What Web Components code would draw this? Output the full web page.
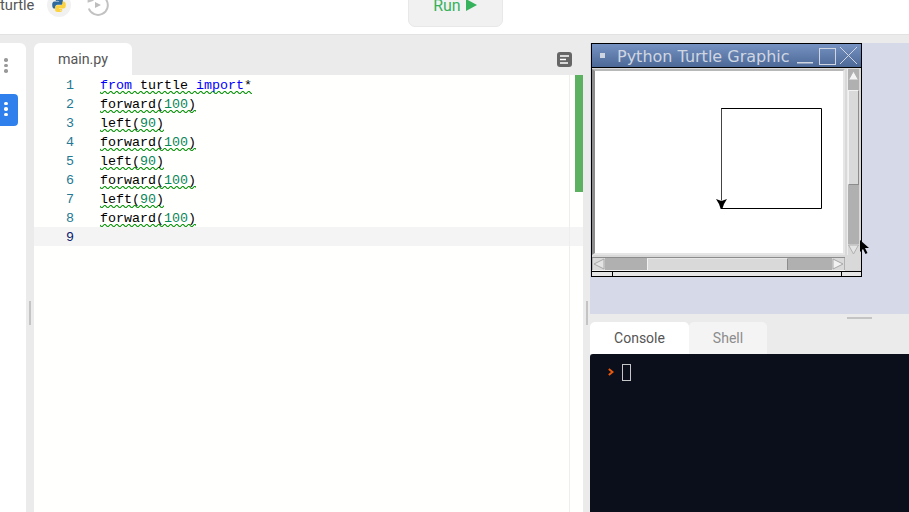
<!DOCTYPE html>
<html>
<head>
<meta charset="utf-8">
<title>turtle</title>
<style>
  html, body { margin: 0; height: 512px; overflow: hidden; background: #ebebeb; }
  body { font-family: Roboto, "Liberation Sans", sans-serif; color: #444; }
  .main { display: flex; padding-top: 8px; height: 469px; }
  .right { width: 319px; display: flex; flex-direction: column; }
</style>
</head>
<body>
<top-bar>turtle</top-bar>
<div class="main">
  <side-rail></side-rail>
  <split-handle style="width:8px" pad="3"></split-handle>
  <code-editor file="main.py"></code-editor>
  <split-handle style="width:7px" pad="3"></split-handle>
  <div class="right">
    <turtle-stage><turtle-window>Python Turtle Graphic</turtle-window></turtle-stage>
    <console-panel></console-panel>
  </div>
</div>

<script>
class TopBar extends HTMLElement {
  constructor() {
    super();
    this.attachShadow({ mode: "open" });
    this.shadowRoot.innerHTML = `
      <style>
        :host { display: block; height: 34px; background: #fff; border-bottom: 1px solid #e2e2e2; overflow: hidden; }
        .row { display: flex; align-items: center; height: 44px; margin-top: -17px; font-size: 14.7px; color: #555; }
        .lang { width: 24px; height: 24px; border-radius: 50%; background: #f1f1f1; margin-left: 13px; display: flex; align-items: center; justify-content: center; }
        .hist { margin-left: 15px; width: 24px; height: 24px; }
        .run { margin-left: 298px; width: 95px; height: 44px; box-sizing: border-box; padding-right: 2px; background: #f1f1f1; border: 1px solid #e8e8e8; border-radius: 7px; color: #37b25c; font-size: 16px; display: flex; align-items: center; justify-content: center; gap: 5px; }
      </style>
      <div class="row">
        <slot></slot>
        <span class="lang">
          <svg width="16" height="16" viewBox="0 0 24 24">
            <path fill="#2f6a9e" d="M11.9 1.5C6.9 1.5 7.2 3.7 7.2 3.7v2.4h4.9v.8H5.3S1.8 6.5 1.8 12s3.1 5.4 3.1 5.4h1.9v-2.600s-.1-3.100 3-3.100h5.100s2.900 0 2.900-2.800V4.300S18.300 1.500 11.900 1.500zM9.200 3.100a.9.9 0 1 1 0 1.800.9.9 0 0 1 0-1.800z"/>
            <path fill="#fcd23f" transform="rotate(180 12 12)" d="M11.9 1.500C6.900 1.500 7.200 3.700 7.200 3.700v2.400h4.900v.8H5.300S1.800 6.500 1.800 12s3.100 5.400 3.100 5.400h1.900v-2.600s-.1-3.100 3-3.100h5.100s2.900 0 2.900-2.800V4.300S18.300 1.500 11.900 1.500zM9.200 3.100a.9.9 0 1 1 0 1.800.9.9 0 0 1 0-1.800z"/>
          </svg>
        </span>
        <svg class="hist" viewBox="0 0 24 24" fill="none">
          <path d="M6.200 4.200A9.800 9.800 0 1 1 2.800 15.500" stroke="#c2c2c2" stroke-width="2"/>
          <path d="M2.500 2.500l3.500 2.500M2.500 2.500v6l5-1.500" stroke="#c2c2c2" stroke-width="1.800"/>
          <path d="M9 9l6 3-6 3z" fill="#bdbdbd"/>
        </svg>
        <span class="run">Run
          <svg width="11" height="12" viewBox="0 0 11 12"><path d="M0 0l11 6-11 6z" fill="#37b25c"/></svg>
        </span>
      </div>`;
  }
}

class SideRail extends HTMLElement {
  constructor() {
    super();
    this.attachShadow({ mode: "open" });
    this.shadowRoot.innerHTML = `
      <style>
        :host { display: block; width: 26px; background: #fff; border-top-right-radius: 6px; padding-top: 15px; box-sizing: border-box; }
        .dots { display: flex; flex-direction: column; align-items: center; gap: 2px; width: 12px; }
        .dots i { width: 3.5px; height: 3.5px; border-radius: 50%; background: #999; }
        .btn { margin-top: 21px; width: 18px; height: 32px; background: #2f80ed; border-radius: 0 4px 4px 0; padding-top: 8px; box-sizing: border-box; }
        .btn i { background: #fff; }
      </style>
      <div class="dots"><i></i><i></i><i></i></div>
      <div class="btn"><div class="dots"><i></i><i></i><i></i></div></div>`;
  }
}

class SplitHandle extends HTMLElement {
  constructor() {
    super();
    this.attachShadow({ mode: "open" });
    this.shadowRoot.innerHTML = `
      <style>
        :host { display: block; flex: none; box-sizing: border-box; padding-top: 258px; }
        div { width: 2px; height: 24px; background: #c4c4c4; }
      </style>
      <div></div>`;
  }
  connectedCallback() {
    this.style.paddingLeft = this.getAttribute("pad") + "px";
  }
}

class CodeEditor extends HTMLElement {
  constructor() {
    super();
    this.attachShadow({ mode: "open" });
    const kw = (s) => `<b>${s}</b>`;
    const num = (s) => `<u>${s}</u>`;
    const lines = [
      `${kw("from")} turtle ${kw("import")}*`,
      `forward(${num(100)})`,
      `left(${num(90)})`,
      `forward(${num(100)})`,
      `left(${num(90)})`,
      `forward(${num(100)})`,
      `left(${num(90)})`,
      `forward(${num(100)})`,
      ``,
    ];
    const rows = lines.map((code, i) => `
      <div class="line ${code ? "" : "active"}">
        <span class="no">${i + 1}</span><span class="code">${code}</span>
      </div>`).join("");
    // same zigzag an editor squiggle uses, 6x3 tile along the bottom of the line
    const squiggle = `url("data:image/svg+xml,%3Csvg xmlns='http://www.w3.org/2000/svg' viewBox='0 0 6 3' height='3' width='6'%3E%3Cg fill='%23009000'%3E%3Cpolygon points='5.5,0 2.5,3 1.1,3 4.1,0'/%3E%3Cpolygon points='4,0 6,2 6,0.6 5.4,0'/%3E%3Cpolygon points='0,2 1,3 2.4,3 0,0.6'/%3E%3C/g%3E%3C/svg%3E")`;
    this.shadowRoot.innerHTML = `
      <style>
        :host { display: flex; flex-direction: column; width: 549px; flex: none; }
        .tabs { display: flex; height: 32px; align-items: stretch; justify-content: space-between; }
        .tab { width: 98px; background: #fff; border-radius: 6px 6px 0 0; font-size: 14.3px; color: #555; display: flex; align-items: center; justify-content: center; }
        .outline { margin: 9px 11px 0 0; width: 15px; height: 15px; }
        .body { flex: 1; position: relative; background: #fffffd; font: 13.333px/19px "Liberation Mono", monospace; color: #000; }
        .line { display: flex; height: 19px; box-sizing: border-box; padding-top: 1px; white-space: pre; }
        .line.active { background: #f4f4f4; }
        .no { width: 40px; text-align: right; color: #237893; margin-right: 26px; flex: none; }
        .active .no { color: #0b216f; }
        .code { background: ${squiggle} repeat-x left bottom; height: 18px; }
        .active .code { background: none; }
        b { font-weight: normal; color: #0000ff; }
        u { text-decoration: none; color: #098658; }
        .scroll { position: absolute; top: 0; bottom: 0; right: 0; width: 13px; border-left: 1px solid #eeeeee; }
        .scroll i { position: absolute; right: 0; top: 0; width: 8px; height: 117px; background: #5cb161; }
      </style>
      <div class="tabs">
        <div class="tab">${this.getAttribute("file")}</div>
        <svg class="outline" viewBox="0 0 15 15">
          <rect width="15" height="15" rx="3" fill="#666"/>
          <path d="M3 4h9M3 7.5h6M3 11h8" stroke="#fff" stroke-width="1.5"/>
        </svg>
      </div>
      <div class="body">${rows}<div class="scroll"><i></i></div></div>`;
  }
}

class TurtleStage extends HTMLElement {
  constructor() {
    super();
    this.attachShadow({ mode: "open" });
    this.shadowRoot.innerHTML = `
      <style>
        :host { display: block; position: relative; height: 271px; background: #d6d9e8; flex: none; }
        ::slotted(turtle-window) { position: absolute; left: 1px; top: 0; }
        svg { position: absolute; left: 270px; top: 197px; }
      </style>
      <slot></slot>
      <svg width="10" height="16" viewBox="0 0 10 16"><path d="M0 0v12l3-3 2.5 5 2-1L5 8h4z" fill="#000"/></svg>`;
  }
}

class TurtleWindow extends HTMLElement {
  constructor() {
    super();
    this.attachShadow({ mode: "open" });
    this.shadowRoot.innerHTML = `
      <style>
        :host { width: 271px; height: 234px; box-sizing: border-box; border: 1px solid #000; background: #d9d9d9; display: flex; flex-direction: column; }
        .title { height: 23px; flex: none; background: linear-gradient(#7592c2, #4c6896); border-bottom: 1px solid #000; display: flex; align-items: center; color: #cfd6e2; font: 16px "DejaVu Sans", sans-serif; white-space: nowrap; overflow: hidden; }
        .pin { width: 5px; height: 5px; background: #cfd6e2; margin: 0 12px 0 8px; flex: none; }
        .label { margin-top: 2px; }
        .btns { margin-left: 7px; flex: none; display: block; }
        .grid { flex: 1; display: grid; grid-template-columns: 253px 13px; grid-template-rows: 186px 14px; column-gap: 2px; row-gap: 2px; padding-top: 1px; min-height: 0; }
        .frame { box-sizing: border-box; background: #fff; border-style: solid; border-width: 2px 2px 2px 3px; border-color: #b8b8b8 #e6e6e6 #e6e6e6 #8c8c8c; }
        .frame svg { display: block; }
        .v { background: #b0b0b0; position: relative; border-left: 1px solid #ececec; border-right: 1px solid #d9d9d9; box-sizing: border-box; }
        .v i { position: absolute; left: 0; right: 0; top: 21px; height: 95px; background: #d9d9d9; border-top: 1px solid #f2f2f2; border-left: 1px solid #f2f2f2; border-bottom: 1px solid #8c8c8c; border-right: 1px solid #8c8c8c; box-sizing: border-box; }
        .h { background: #b0b0b0; position: relative; border-bottom: 1px solid #f2f2f2; border-top: 1px solid #8c8c8c; box-sizing: border-box; }
        .h i { position: absolute; left: 55px; width: 141px; top: 0; bottom: 0; background: #d9d9d9; border-top: 1px solid #e6e6e6; border-left: 1px solid #f2f2f2; border-right: 1px solid #8c8c8c; box-sizing: border-box; }
        .arrow { position: absolute; display: block; }
        .lit { background: #d9d9d9; }
        .status { flex: none; height: 4px; border-top: 1px solid #000; display: grid; grid-template-columns: 20px 1fr 20px; background: #e6e6e6; }
        .status span + span { border-left: 1px solid #000; }
      </style>
      <div class="title">
        <span class="pin"></span><span class="label"><slot></slot></span>
        <svg class="btns" width="62" height="23" viewBox="0 0 62 23" fill="none" stroke="#cfd6e2">
          <path d="M0 18h16v1.5H0z" fill="#cfd6e2" stroke="none"/>
          <rect x="22.5" y="4.5" width="16" height="16"/>
          <path d="M43 3l17 17M60 3L43 20"/>
        </svg>
      </div>
      <div class="grid">
        <div class="frame">
          <svg width="248" height="182" viewBox="0 0 248 182" fill="none">
            <path d="M126 37.5h100.5v100h-100" stroke="#000"/>
            <path d="M126.5 37.5v92" stroke="#444"/>
            <path d="M121 128l5.5 2 5.5-2-3 5-1.700 5h-1.600l-1.700-5z" fill="#000"/>
          </svg>
        </div>
        <div class="v">
          <svg class="arrow" style="top:1px;left:0" width="11" height="11"><path d="M5.500 1l5 9H.5z" fill="#f4f4f4" stroke="#b0b0b0"/></svg>
          <i></i>
          <svg class="arrow lit" style="bottom:0;left:0" width="11" height="11"><path d="M5.500 10l5-9H.5z" fill="#e4e4e4" stroke="#b0b0b0"/></svg>
        </div>
        <div class="h">
          <svg class="arrow lit" style="left:1px;top:0" width="12" height="12"><path d="M1 6l10-5v10z" fill="#e4e4e4" stroke="#a8a8a8"/></svg>
          <i></i>
          <svg class="arrow lit" style="right:1px;top:0" width="12" height="12"><path d="M11 6L1 1v10z" fill="#f2f2f2" stroke="#a8a8a8"/></svg>
        </div>
      </div>
      <div class="status"><span></span><span></span><span></span></div>`;
  }
}

class ConsolePanel extends HTMLElement {
  constructor() {
    super();
    this.attachShadow({ mode: "open" });
    this.shadowRoot.innerHTML = `
      <style>
        :host { display: flex; flex-direction: column; flex: 1; min-height: 0; }
        .grip { height: 8px; flex: none; box-sizing: border-box; padding: 3px 37px 0 257px; }
        .grip div { height: 2px; background: #c4c4c4; }
        .tabs { display: flex; height: 32px; flex: none; font-size: 14px; }
        .tabs span { display: flex; align-items: center; justify-content: center; border-radius: 5px 5px 0 0; }
        .on { width: 99px; background: #fff; color: #555; }
        .off { width: 78px; background: #f4f4f4; color: #8c8c8c; }
        .term { flex: 1; background: #0b0f1c; border-top-left-radius: 3px; display: flex; align-items: flex-start; padding: 10px 0 0 18px; gap: 8px; }
        .term svg { margin-top: 4px; }
        .cursor { width: 9px; height: 17px; box-sizing: border-box; border: 1px solid #c6c6c6; }
      </style>
      <div class="grip"><div></div></div>
      <div class="tabs"><span class="on">Console</span><span class="off">Shell</span></div>
      <div class="term">
        <svg width="6" height="8" viewBox="0 0 6 8" fill="none"><path d="M.8 1L4.500 4 .8 7" stroke="#e8590c" stroke-width="2"/></svg>
        <div class="cursor"></div>
      </div>`;
  }
}

customElements.define("top-bar", TopBar);
customElements.define("side-rail", SideRail);
customElements.define("split-handle", SplitHandle);
customElements.define("code-editor", CodeEditor);
customElements.define("turtle-stage", TurtleStage);
customElements.define("turtle-window", TurtleWindow);
customElements.define("console-panel", ConsolePanel);
</script>
</body>
</html>
